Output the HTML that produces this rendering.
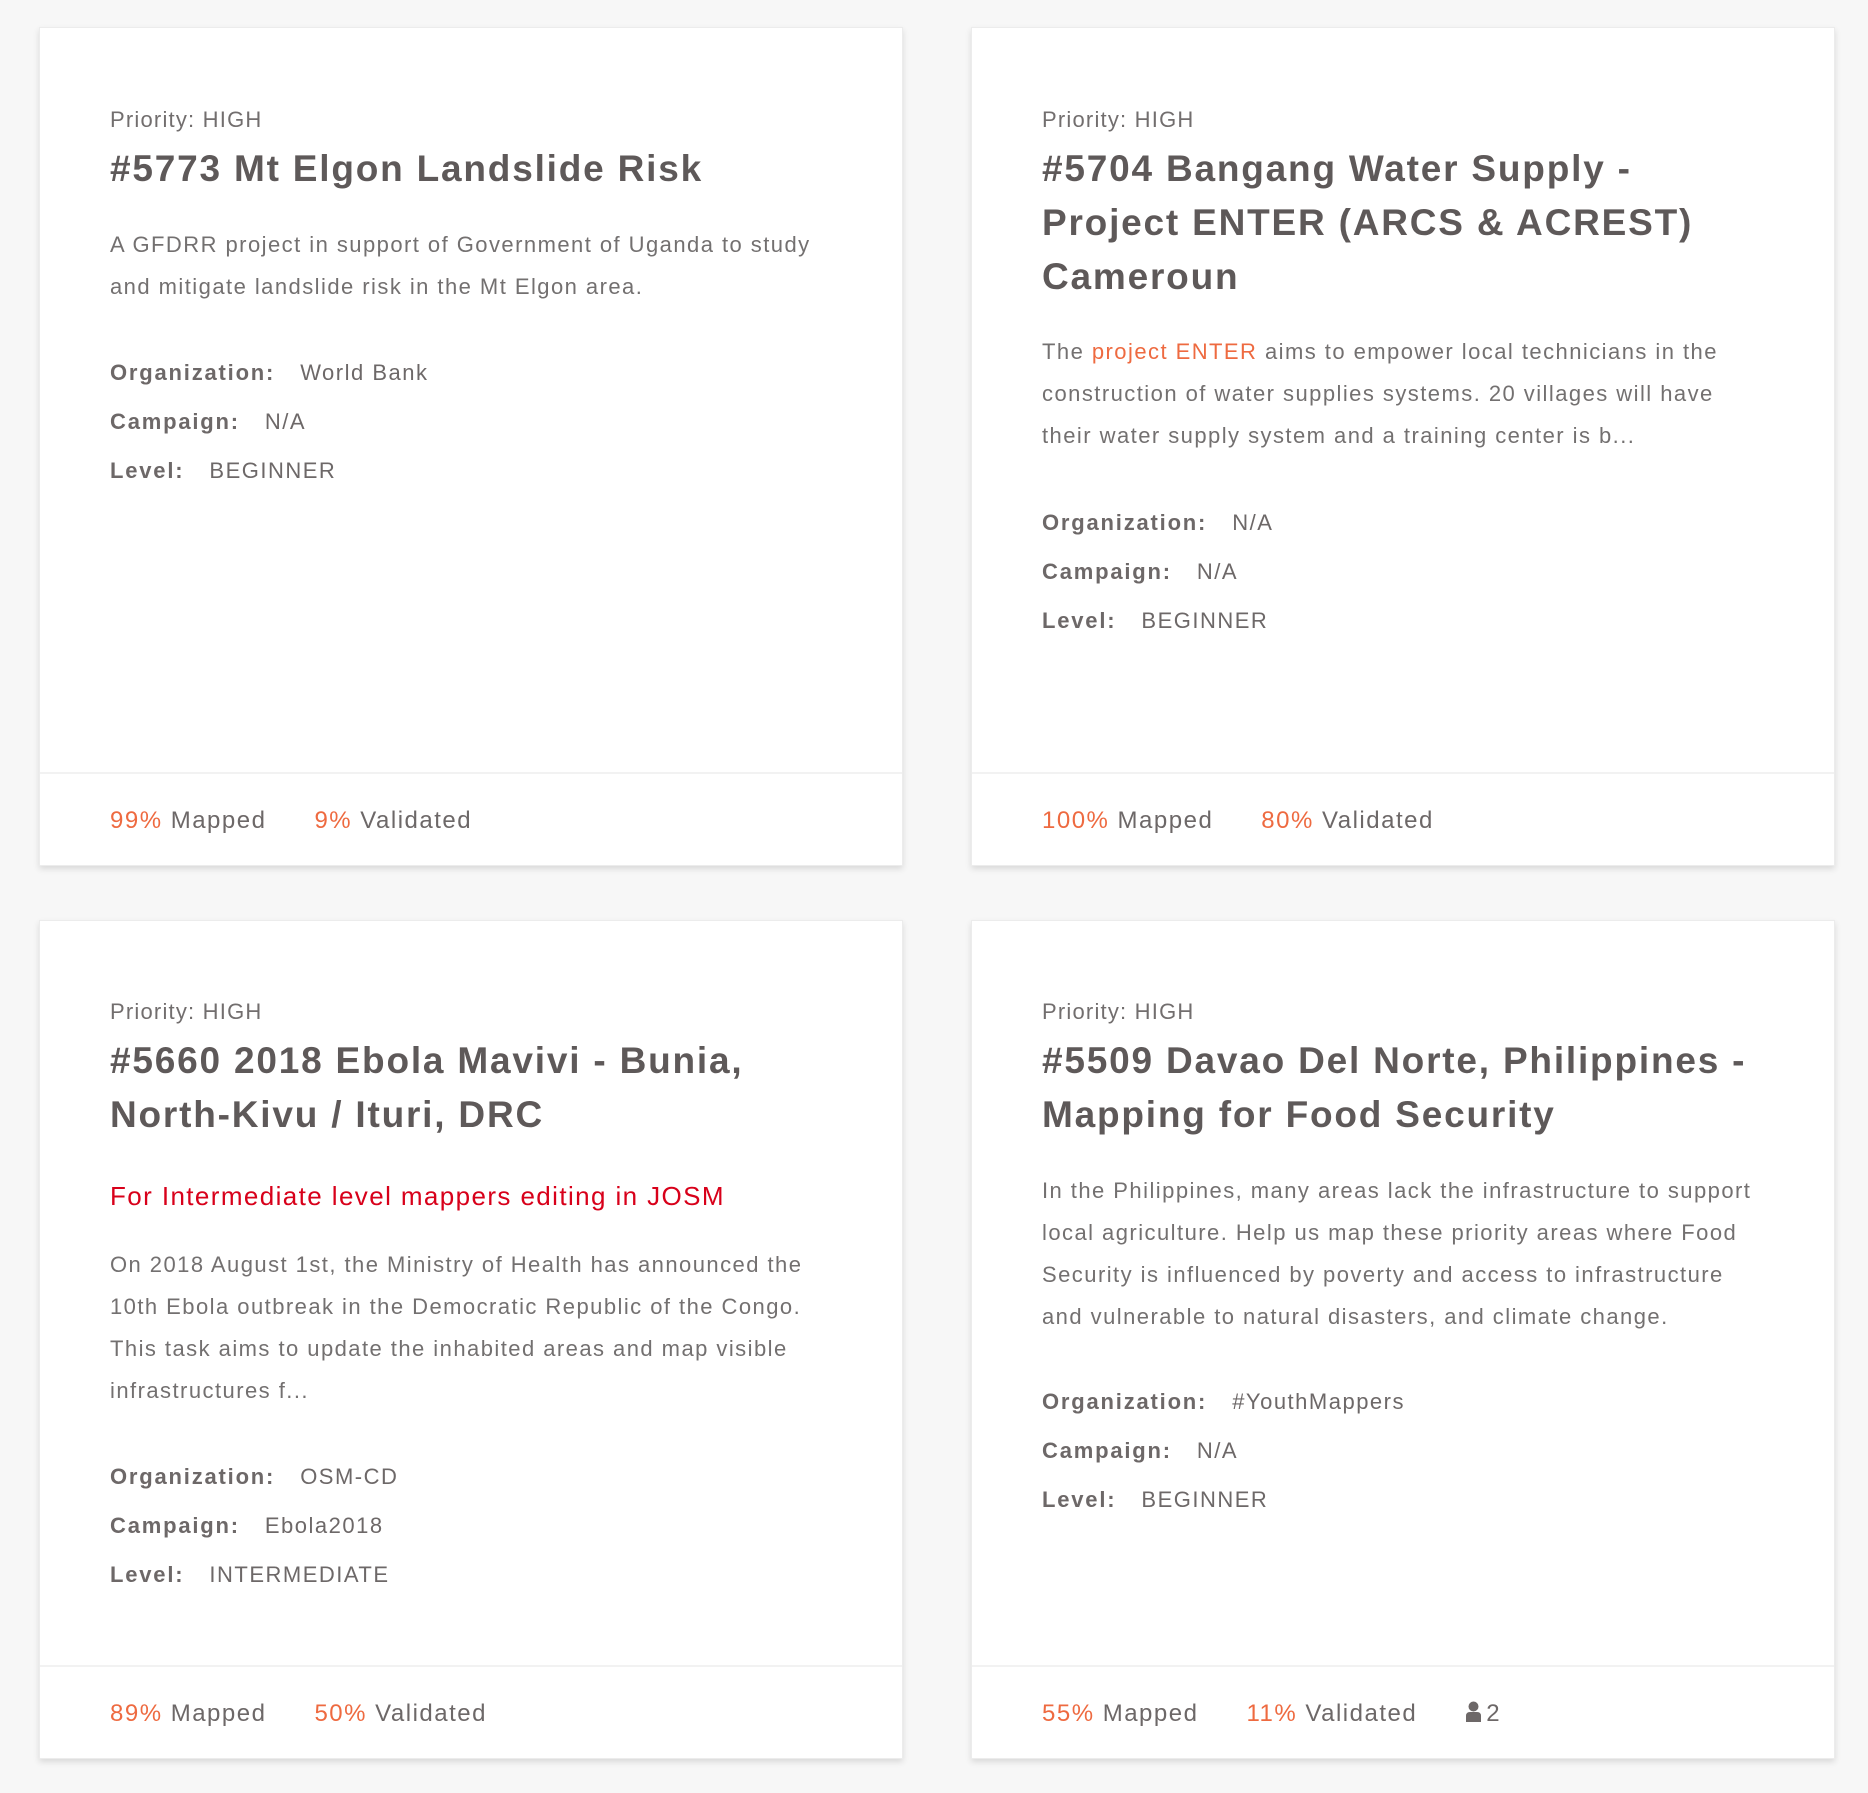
<!DOCTYPE html>
<html><head><meta charset="utf-8"><style>
body{margin:0;background:#f7f7f7;width:1868px;height:1793px;position:relative;font-family:"Liberation Sans",sans-serif;color:#6d6868;overflow:hidden}
.card{position:absolute;width:864px;height:839px;background:#fff;border:1px solid #ececec;box-sizing:border-box;box-shadow:0 3px 6px rgba(0,0,0,.12)}
.card>div{position:absolute;left:70px;right:0;white-space:nowrap}
.pr{font-size:22px;line-height:30px;color:#726e6e;letter-spacing:1.2px}
.ti{font-size:37px;line-height:54px;font-weight:bold;color:#5e5959;letter-spacing:1.8px}
.de{font-size:22px;line-height:42px;color:#737070;letter-spacing:1.45px}
.me{font-size:22px;line-height:49px;color:#6d6868;letter-spacing:1.5px}
.me b{color:#6d6868;display:inline-block;margin-right:25px;letter-spacing:1.8px}
.red{font-size:26px;line-height:40px;color:#d8001a;letter-spacing:1.4px}
.ft{left:0!important;right:0!important;top:744px;height:94px;border-top:2px solid #f2f2f2;font-size:24px;line-height:94px;padding-left:70px;color:#6d6868;letter-spacing:1.5px}
.o{color:#ee6a40}
.ft span.g{display:inline-block;margin-right:48px}
a{color:#ee6a40;text-decoration:none}
</style></head><body>

<div class="card" style="left:39px;top:27px">
<div class="pr" style="top:77px">Priority: HIGH</div>
<div class="ti" style="top:114px">#5773 Mt Elgon Landslide Risk</div>
<div class="de" style="top:196px">A GFDRR project in support of Government of Uganda to study<br>and mitigate landslide risk in the Mt Elgon area.</div>
<div class="me" style="top:320px"><b>Organization:</b>World Bank<br><b>Campaign:</b>N/A<br><b>Level:</b>BEGINNER</div>
<div class="ft"><span class="g"><span class="o">99%</span> Mapped</span><span class="g"><span class="o">9%</span> Validated</span></div>
</div>

<div class="card" style="left:971px;top:27px">
<div class="pr" style="top:77px">Priority: HIGH</div>
<div class="ti" style="top:114px">#5704 Bangang Water Supply -<br>Project ENTER (ARCS &amp; ACREST)<br>Cameroun</div>
<div class="de" style="top:303px">The <a>project ENTER</a> aims to empower local technicians in the<br>construction of water supplies systems. 20 villages will have<br>their water supply system and a training center is b...</div>
<div class="me" style="top:470px"><b>Organization:</b>N/A<br><b>Campaign:</b>N/A<br><b>Level:</b>BEGINNER</div>
<div class="ft"><span class="g"><span class="o">100%</span> Mapped</span><span class="g"><span class="o">80%</span> Validated</span></div>
</div>

<div class="card" style="left:39px;top:920px">
<div class="pr" style="top:76px">Priority: HIGH</div>
<div class="ti" style="top:113px">#5660 2018 Ebola Mavivi - Bunia,<br>North-Kivu / Ituri, DRC</div>
<div class="red" style="top:255px">For Intermediate level mappers editing in JOSM</div>
<div class="de" style="top:323px">On 2018 August 1st, the Ministry of Health has announced the<br>10th Ebola outbreak in the Democratic Republic of the Congo.<br>This task aims to update the inhabited areas and map visible<br>infrastructures f...</div>
<div class="me" style="top:531px"><b>Organization:</b>OSM-CD<br><b>Campaign:</b>Ebola2018<br><b>Level:</b>INTERMEDIATE</div>
<div class="ft"><span class="g"><span class="o">89%</span> Mapped</span><span class="g"><span class="o">50%</span> Validated</span></div>
</div>

<div class="card" style="left:971px;top:920px">
<div class="pr" style="top:76px">Priority: HIGH</div>
<div class="ti" style="top:113px">#5509 Davao Del Norte, Philippines -<br>Mapping for Food Security</div>
<div class="de" style="top:249px">In the Philippines, many areas lack the infrastructure to support<br>local agriculture. Help us map these priority areas where Food<br>Security is influenced by poverty and access to infrastructure<br>and vulnerable to natural disasters, and climate change.</div>
<div class="me" style="top:456px"><b>Organization:</b>#YouthMappers<br><b>Campaign:</b>N/A<br><b>Level:</b>BEGINNER</div>
<div class="ft"><span class="g"><span class="o">55%</span> Mapped</span><span class="g"><span class="o">11%</span> Validated</span><span class="g"><svg width="17" height="22" viewBox="0 0 17 22" style="vertical-align:-2px;margin-right:4px"><circle cx="8.5" cy="5.5" r="5" fill="#6d6868"/><path d="M1 21 V15 Q1 11 5 11 H12 Q16 11 16 15 V21 Z" fill="#6d6868"/></svg>2</span></div>
</div>

</body></html>
